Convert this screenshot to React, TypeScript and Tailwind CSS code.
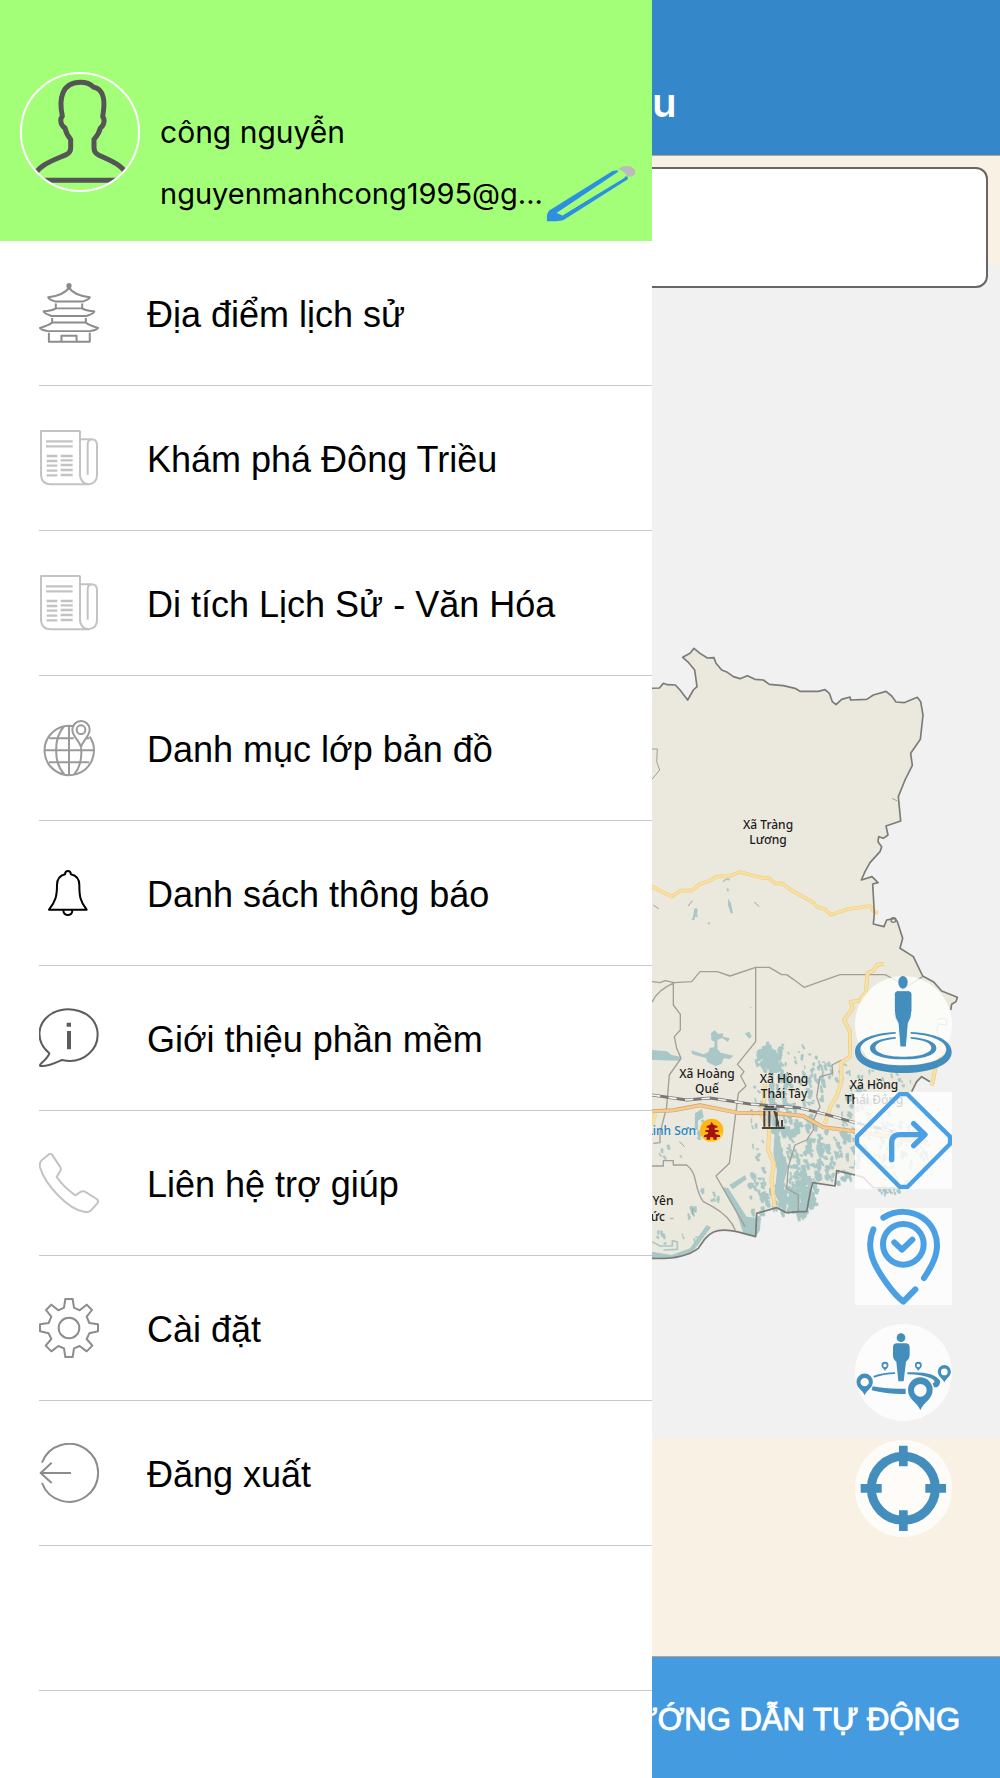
import type { ReactNode } from "react";

const GREY = "#8c8c8c";
const LIGHT = "#c3c3c3";
const BLUE = "#448ebd";
const SKY = "#4aa0e3";
const WATER = "#a9c7c6";

function Icon({ box, color, width = 6, children }: { box: string; color: string; width?: number; children: ReactNode }) {
  return (
    <svg
      aria-hidden="true"
      viewBox={box}
      className="size-[60px] shrink-0"
      fill="none"
      stroke={color}
      strokeWidth={width}
      strokeLinejoin="round"
    >
      {children}
    </svg>
  );
}

const temple = (
  <Icon box="117 70 180 182" color={GREY}>
    <path d="M207 84C196 101 172 110 144 113C145 120 155 122 164 126H250C259 122 269 120 270 113C242 110 218 101 207 84Z" />
    <circle cx="207" cy="78" r="5" fill={GREY} />
    <path d="M167 132V147M247 132V147M167 147H247M167 147C158 153 145 155 130 156C132 164 143 166 154 170H260C271 166 282 164 284 156C269 155 256 153 247 147" />
    <path d="M156 176V190M258 176V190M156 190H258M156 190C148 198 134 202 119 206C121 212 132 213 142 216H272C282 213 293 212 295 206C280 202 266 198 258 190" />
    <path d="M146 221V248H270V221M184 248V230H230V248" />
  </Icon>
);

const newspaper = (
  <Icon box="117 508 180 180" color={LIGHT}>
    <path d="M241 517H123V650Q125 676 152 677H266Q291 674 291 650V558Q290 542 274 542H241M240 517V650Q242 674 266 677M263 648V556Q264 543 276 542" />
    <path
      strokeWidth="7"
      d="M138 548H218M138 563H218M140 592H172M140 607H172M140 621H172M140 636H172M140 650H172M182 592H218M182 605H218M182 619H218M182 634H218M182 649H218"
    />
  </Icon>
);

const globe = (
  <Icon box="117 86 180 180" color="#9a9a9a">
    <path d="M223 111A74 74 0 1 0 269 142M207 108V257M133 183H281M148 147H221M258 147H267M147 219H267M193 110C160 145 160 220 193 255M243 176C247 205 239 237 222 255" />
    <path d="M243 173C237 151 217 141 217 121A26 26 0 0 1 269 121C269 141 249 151 243 173Z" />
    <circle cx="243" cy="121" r="13" />
  </Icon>
);

const bell = (
  <Icon box="117 522 180 180" color="#000">
    <path d="M195 556C196 543 211 543 213 556C229 560 238 570 238 588C238 620 240 638 260 662H147C167 638 171 620 171 588C171 572 180 560 195 556ZM190 664C190 683 217 683 217 664" />
  </Icon>
);

const info = (
  <Icon box="117 956 180 180" color="#5c5c5c">
    <path d="M148 1092C106 1057 108 1000 158 971C207 946 276 964 291 1018C303 1079 249 1127 186 1112C164 1122 142 1133 121 1130C115 1124 140 1114 148 1092Z" />
    <path d="M200 1006H213M207 1025V1080" strokeWidth="12" />
  </Icon>
);

const phone = (
  <Icon box="117 99 180 180" color={LIGHT}>
    <path d="M148 102L125 121Q117 129 120 142C137 197 205 268 252 275Q266 279 273 271L292 250Q297 242 290 237L255 215Q249 212 243 215L226 226C202 209 184 191 170 171L182 151Q184 145 180 140L156 104Q152 99 148 102Z" />
  </Icon>
);

const gear = (
  <Icon box="117 534 180 180" color={GREY}>
    <path d="M196 537H218L222 563L239 571L260 554L276 570L260 590L268 609L294 613V634L268 640L260 657L277 677L260 694L239 678L222 685L218 711H196L192 685L175 678L154 694L137 677L154 657L146 640L120 634V613L146 609L154 590L138 570L154 554L175 571L192 563Z" />
    <circle cx="207" cy="624" r="31" />
  </Icon>
);

const logout = (
  <Icon box="117 969 180 180" color={GREY}>
    <path d="M126 1028A87 87 0 1 1 126 1089M213 1059H122M155 1028L122 1059L155 1089" />
  </Icon>
);

const menu: { label: string; icon: ReactNode }[] = [
  { label: "Địa điểm lịch sử", icon: temple },
  { label: "Khám phá Đông Triều", icon: newspaper },
  { label: "Di tích Lịch Sử - Văn Hóa", icon: newspaper },
  { label: "Danh mục lớp bản đồ", icon: globe },
  { label: "Danh sách thông báo", icon: bell },
  { label: "Giới thiệu phần mềm", icon: info },
  { label: "Liên hệ trợ giúp", icon: phone },
  { label: "Cài đặt", icon: gear },
  { label: "Đăng xuất", icon: logout },
];

function Drawer() {
  return (
    <aside className="z-10 flex w-[65.2%] shrink-0 flex-col bg-white">
      <div className="flex h-[241px] items-start bg-[#a3ff78] pt-[72px] pr-4 pl-5">
        <svg role="img" aria-label="Ảnh đại diện" viewBox="60 66 360 360" className="size-[120px] shrink-0" fill="none">
          <defs>
            <clipPath id="avatar">
              <circle cx="240" cy="246" r="176" />
            </clipPath>
          </defs>
          <g clipPath="url(#avatar)" stroke="#555" strokeWidth="15" strokeLinejoin="round">
            <path d="M100 385C112 345 160 331 199 314Q212 307 212 294V268C203 258 198 248 195 234C181 226 179 207 187 199C176 147 185 97 242 97C259 97 270 101 280 111C316 117 315 161 308 200C316 208 312 227 301 234C298 248 291 258 282 268V294Q282 307 294 314C330 333 370 342 386 385" />
            <path d="M90 391H390" />
          </g>
          <circle cx="240" cy="246" r="177" stroke="#fff" strokeWidth="6" />
        </svg>
        <div className="min-w-0 flex-1 pt-[30px] pl-5 font-['Inter',sans-serif] whitespace-nowrap text-black">
          <p className="text-[30px] leading-[60px]">công nguyễn</p>
          <div className="flex items-center justify-between">
            <p className="text-[29px] leading-[64px]">nguyenmanhcong1995@g...</p>
            <button type="button" aria-label="Chỉnh sửa hồ sơ" className="shrink-0">
              <svg viewBox="620 343 270 172" className="h-[57px] w-[90px]">
                <path d="M820 358L628 478L622 491V510H650L671 507L866 383V375H858L669 492L651 485L836 361V356Z" fill="#2d8fe2" />
                <path d="M658 481L838 363L858 378L668 492Z" fill="#a3ff78" />
                <path d="M838 353C850 337 887 342 889 360C888 375 871 377 863 373Q857 359 838 353Z" fill="#bbb" />
              </svg>
            </button>
          </div>
        </div>
      </div>
      <nav aria-label="Menu chính">
        <ul>
          {menu.map((item) => (
            <li key={item.label} className="ml-[39px] h-[145px] border-b border-[#c9c9cb]">
              <button type="button" className="flex h-full w-full items-center gap-12 text-left text-[36px] whitespace-nowrap text-black">
                {item.icon}
                <span className="pt-1">{item.label}</span>
              </button>
            </li>
          ))}
          <li aria-hidden="true" className="ml-[39px] h-[145px] border-b border-[#c9c9cb]" />
        </ul>
      </nav>
    </aside>
  );
}

/* Irregular pond shapes scattered over an ellipse: [cx, cy, rx, ry, count, size]. */
const ponds: number[][] = [
  [385, 350, 40, 50, 40, 9],
  [450, 350, 110, 40, 18, 5],
  [420, 520, 40, 140, 55, 10],
  [490, 640, 50, 130, 75, 10],
  [480, 750, 40, 70, 70, 12],
  [590, 640, 60, 90, 60, 9],
  [570, 390, 60, 35, 20, 6],
  [430, 770, 70, 40, 40, 9],
  [350, 740, 25, 110, 30, 8],
  [510, 440, 40, 60, 28, 8],
  [350, 530, 20, 110, 14, 6],
  [640, 500, 60, 80, 30, 7],
  [720, 590, 80, 90, 50, 6],
  [790, 640, 80, 90, 45, 6],
  [740, 410, 90, 30, 14, 5],
  [740, 745, 45, 8, 14, 7],
  [110, 860, 80, 60, 12, 6],
  [190, 790, 50, 50, 9, 7],
  [90, 610, 50, 60, 5, 6],
  [180, 560, 20, 40, 5, 7],
];

function pondPath() {
  let seed = 17;
  const next = () => {
    seed = (seed * 16807) % 2147483647;
    return seed / 2147483647;
  };
  let d = "";
  for (const [cx, cy, rx, ry, count, size] of ponds) {
    for (let i = 0; i < count; i++) {
      const angle = next() * Math.PI * 2;
      const reach = Math.sqrt(next());
      const x = cx + Math.cos(angle) * rx * reach;
      const y = cy + Math.sin(angle) * ry * reach;
      const w = Math.round(size * (0.4 + next() * 0.9));
      const h = Math.round(size * (0.3 + next() * 1.4));
      const step = Math.round(size * (next() - 0.3));
      d += `M${x.toFixed(0)} ${y.toFixed(0)}h${w}v${h}h${step}v${Math.round(h * 0.7)}h${-Math.round(w * 0.7)}l${-Math.round(w * 0.6)} ${-h}z`;
    }
  }
  return d;
}

const land =
  "M30 205L58 204 70 190 82 194 106 195 120 210 143 240 160 210 171 200 164 150 146 128 128 112 150 100 162 85 180 100 202 114 222 113 228 130 245 150 262 157 280 170 300 176 322 167 345 178 370 180 388 193 430 197 465 205 480 214 535 214 555 209 568 220 577 245 588 254 605 238 630 231 632 240 680 238 700 225 738 214 755 228 768 246 792 248 832 232 842 245 849 285 841 358 812 400 817 436 795 480 775 530 782 603 738 618 744 645 730 655 716 650 714 665 725 680 720 695 690 728 675 755 664 780 696 770 714 788 698 792 703 880 700 912 732 920 740 900 765 895 772 905 788 955 780 985 820 1010 848 1068 880 1085 905 1113 952 1132 948 1145 935 1153 932 1170";

const landSouth =
  "L920 1195 892 1200 890 1220 903 1260 885 1345 870 1385 845 1375 830 1385 815 1415 830 1480 845 1590 878 1650 815 1662 780 1702 700 1700 670 1670 645 1665 590 1652 585 1698 518 1688 510 1720 500 1775 480 1775 440 1778 410 1763 350 1780 347 1850 310 1840C220 1815 205 1840 175 1885Q130 1920 30 1915Z";

function MapView() {
  return (
    <svg
      role="img"
      aria-label="Bản đồ Đông Triều"
      viewBox="652 265 348 1173"
      className="h-[1173px] w-full"
      fill="none"
      fontFamily="'Noto Sans', sans-serif"
    >
      <g transform="translate(640 620) scale(.33333)" strokeLinejoin="round">
        <path d={land + landSouth} fill="#ebe9dd" />
        <g transform="translate(0 960)">
          <path d={pondPath()} fill={WATER} stroke={WATER} strokeWidth="2" />
          <path
            d="M36 330L80 334L95 345L122 350V362L36 360ZM154 331L190 343L205 336L210 323L223 322L224 306L214 300L213 280L224 271L235 282L249 280V290L269 295L264 306L246 294L232 300L232 326L242 338L280 347L270 357L251 355L245 371L227 379L202 366L198 354L157 343ZM314 280L328 275L335 289L328 296ZM365 320L395 315L396 345L420 372L428 390L408 400L390 392L370 380L352 376L368 360ZM165 520L186 507L191 532L174 542L174 570H164ZM405 570L420 600L428 640L445 680L428 740L450 790L425 800L404 760L411 690L400 640ZM245 740L265 745L320 830L362 835L360 870L347 890L310 880L290 820ZM268 735L315 706L320 718L278 748ZM36 935L95 945L150 925L200 855L213 862L160 933L110 955L36 958ZM328 202L335 200V204Z"
            fill={WATER}
          />
          <path d="M36 905L60 918L97 918L97 902L112 906V928L70 930" stroke={WATER} strokeWidth="5" />
        </g>
        <g fill={WATER}>
          <path d="M163 865L173 866 171 885 175 891 165 890 163 901 155 900 160 886ZM265 835L273 850 279 880 272 880 264 855ZM260 805L267 806 265 815 260 813ZM203 907L211 908 208 914 203 912Z" />
          <path d="M249 785Q258 774 270 779" stroke={WATER} strokeWidth="5" fill="none" />
        </g>
        <g stroke="#a09f98" strokeWidth="4">
          <path d="M36 387H52L50 425L59 450L36 478M40 855L56 866M157 842L145 858M343 846L357 860M756 535L772 543" strokeWidth="3" />
          <g transform="translate(0 960)">
            <path d="M36 125L60 128L75 122L103 128L155 125L180 95H232L270 108L347 82H388L425 104H440L460 118L492 142L600 104H735L760 117L800 140L848 110" />
            <path d="M103 128C65 145 45 165 36 187M100 128V195L121 223V270L103 290L110 325L123 355L88 405L80 500L60 580V608L40 610M347 82V305L292 373L312 395L302 408L318 438L295 460L268 670L228 708L315 860M36 678H70V662H100V675H140C175 700 160 745 190 785L218 800C270 830 282 860 286 872M530 470L540 410L578 400L576 375L605 360M530 470L540 500L520 540V570L500 600L465 615L445 680L440 745L475 765V815" />
            <path d="M890 240L905 235L920 238V255L895 252L890 270L905 310L898 340M158 805V825M118 605L134 620M800 560L850 630L878 690" strokeWidth="3" />
          </g>
        </g>
        <g transform="translate(0 960)">
          {[
            ["#dfc98e", 12],
            ["#f9dfa0", 9],
          ].map(([color, width]) => (
            <g key={color} stroke={color as string} strokeWidth={width}>
              <path d="M732 72L712 74L700 92L682 100L678 155L658 183L632 185L638 205L612 240L630 275V350L604 368V425L590 470L572 498L555 550M375 432L372 485L362 520L388 570L384 630L402 670L394 720L404 800M46 522L36 555M905 300L885 390L876 438M870 655L875 705" />
            </g>
          ))}
          <path d="M36 514L100 511L180 496L292 518L425 521L490 528L550 562L645 574L860 608" stroke="#c7a374" strokeWidth="12" />
          <path d="M36 514L100 511L180 496L292 518L425 521L490 528L550 562L645 574L860 608" stroke="#f8c98b" strokeWidth="8" />
          <path d="M36 465L140 480L210 474L330 492L475 503L560 524L645 548L760 575" stroke="#77777a" strokeWidth="9" />
          <path d="M36 465L140 480L210 474L330 492L475 503L560 524L645 548L760 575" stroke="#f3f3f0" strokeWidth="5" strokeDasharray="25 25" />
        </g>
        <path d="M30 797L95 830L120 812H155L180 792L210 782L230 770L270 768L300 756L370 775L385 773L405 790L425 790L450 808L520 848L530 860L555 868L572 884L625 867L690 858L702 875L715 878" stroke="#ecd092" strokeWidth="11" />
        <path d="M30 797L95 830L120 812H155L180 792L210 782L230 770L270 768L300 756L370 775L385 773L405 790L425 790L450 808L520 848L530 860L555 868L572 884L625 867L690 858L702 875L715 878" stroke="#fae09b" strokeWidth="7" />
        <path d={land} stroke="#7b7b78" strokeWidth="5" />
        <path d="M870 1385L845 1370 830 1385 815 1415M780 1705L700 1703 670 1672 645 1665 590 1652 585 1698 518 1688 510 1720 500 1775 480 1775 440 1778 410 1763 350 1780 347 1850 310 1840C220 1815 205 1840 175 1885Q130 1920 30 1915" stroke="#7b7b78" strokeWidth="5" />
        <circle cx="760" cy="900" r="7" stroke="#7b7b78" strokeWidth="4" />
        <g transform="translate(0 960)">
          <circle cx="215" cy="571" r="35" fill="#fbb817" />
          <path d="M185 590Q222 620 247 573Q242 606 215 606Q195 606 185 590Z" fill="#ffd62e" />
          <path d="M215 546L220 554L232 558V563H224V569L236 571V576H226V582L240 586V591H230V599H220V592H210V599H200V591H192V586L204 582V576H196V571L207 569V563H200V558L211 554Z" fill="#a31111" />
          <path d="M370 508H410M373 513V560M388 513V560M403 513L418 560M366 564H434M410 517V560M426 540V560M374 500H402" stroke="#454545" strokeWidth="6" />
          <path d="M381 514V559M396 514V559M419 530V559" stroke="#d5d5c8" strokeWidth="4" />
        </g>
      </g>
      <g fontSize="12" fontWeight="500" fill="#1c1c1c" textAnchor="middle">
        <text x="768" y="829">Xã Tràng</text>
        <text x="768" y="844">Lương</text>
        <text x="707" y="1078">Xã Hoàng</text>
        <text x="707" y="1093">Quế</text>
        <text x="784" y="1083">Xã Hồng</text>
        <text x="784" y="1098">Thái Tây</text>
        <text x="874" y="1089">Xã Hồng</text>
        <text x="874" y="1104">Thái Đông</text>
        <text x="663" y="1205">Yên</text>
        <text x="665" y="1221" textAnchor="end">ức</text>
        <text x="696" y="1135" textAnchor="end" fill="#1c84c6">
          Linh Sơn
        </text>
      </g>
    </svg>
  );
}

const pin = "M0 50C-9 25-37 18-37-12A37 37 0 0 1 37-12C37 18 9 25 0 50ZM19-10A19 19 0 1 0-19-10A19 19 0 1 0 19-10Z";

const tools: { label: string; shape: string; box: string; art: ReactNode }[] = [
  {
    label: "Vị trí của tôi",
    shape: "rounded-full",
    box: "45 47 291 291",
    art: (
      <g fill={BLUE}>
        <path
          fillRule="evenodd"
          d="M167 215C90 219 45 240 45 275C45 315 110 338 190 338C270 338 335 315 335 275C335 240 290 219 212 215V220C275 224 319 242 319 267C319 297 265 315 190 315C115 315 61 297 61 267C61 242 105 224 167 220Z"
        />
        <path d="M167 230C120 234 90 245 90 263C90 286 135 297 190 297C245 297 289 286 289 263C289 245 260 234 212 230V235C250 238 274 247 274 262C274 279 235 289 190 289C145 289 106 279 106 262C106 247 130 238 167 235Z" />
        <path d="M172 91H206Q216 92 216 102V150Q215 174 205 188L199 260H180L174 188Q163 174 163 150V102Q163 92 172 91Z" stroke="#fcfbfa" strokeWidth="3" />
        <ellipse cx="189" cy="66" rx="14" ry="19" />
      </g>
    ),
  },
  {
    label: "Chỉ đường",
    shape: "",
    box: "45 395 291 291",
    art: (
      <g stroke={SKY} fill="none">
        <path d="M179 401H201L330 529V551L202 680H180L51 551V529Z" strokeWidth="13" />
        <path d="M155 598V548Q155 523 180 523H252M221 490L255 523L221 556" strokeWidth="16" strokeLinecap="round" strokeLinejoin="round" />
      </g>
    ),
  },
  {
    label: "Điểm đã đến",
    shape: "",
    box: "45 53 291 291",
    art: (
      <g stroke={SKY} fill="none" strokeWidth="18" strokeLinecap="round" strokeLinejoin="round">
        <path d="M130 82C212 32 306 97 289 185C284 216 266 242 252 263M100 117C75 175 102 227 139 277Q165 314 190 334L226 297" />
        <circle cx="190" cy="162" r="61" />
        <path d="M163 156L186 178L217 148" />
      </g>
    ),
  },
  {
    label: "Địa điểm quanh đây",
    shape: "rounded-full",
    box: "45 401 291 291",
    art: (
      <g fill={BLUE}>
        <path d="M98 588Q140 597 197 595V611Q140 612 95 600ZM100 557Q130 546 165 546V551Q130 552 102 562ZM202 546Q281 542 300 571Q302 582 291 591H282L278 579Q290 574 277 566Q250 552 202 552Z" />
        <circle cx="183" cy="442" r="13" />
        <path d="M168 459H199Q209 461 209 471V496Q208 507 198 514L191 573H175L169 514Q159 507 159 496V471Q159 461 168 459Z" />
        <path d={pin} transform="translate(241 610)" fillRule="evenodd" />
        <path d={pin} transform="translate(74 582) scale(.66)" fillRule="evenodd" />
        <path d={pin} transform="translate(313 550) scale(.53)" fillRule="evenodd" />
        <path d={pin} transform="translate(135 528) scale(.28)" fillRule="evenodd" />
        <path d={pin} transform="translate(235 528) scale(.28)" fillRule="evenodd" />
      </g>
    ),
  },
  {
    label: "Định vị",
    shape: "rounded-full",
    box: "45 749 291 291",
    art: (
      <g stroke={BLUE} fill="none">
        <circle cx="190" cy="894" r="96" strokeWidth="27" />
        <path d="M190 766V828M190 960V1022M62 894H125M256 894H318" strokeWidth="26" />
      </g>
    ),
  },
];

export default function App() {
  return (
    <div className="flex min-h-screen overflow-hidden font-['Liberation_Sans',Arial,sans-serif]">
      <Drawer />
      <main className="flex min-w-0 flex-1 flex-col bg-[#f9f1e3]">
        <header className="h-[155px] bg-[#3487c8] pt-[77px]">
          <h1 className="font-['Inter',sans-serif] text-[40px] leading-[52px] font-semibold text-white">u</h1>
        </header>
        <div className="relative flex-1 border-y border-[#b5a48f]">
          <div className="h-[109px]" />
          <div className="bg-[#f1f1f1]">
            <MapView />
          </div>
          <div className="absolute inset-x-0 top-0 pt-[11px] pr-3">
            <input
              type="search"
              aria-label="Tìm kiếm"
              className="block h-[121px] w-full appearance-none rounded-r-[12px] border-2 border-l-0 border-[#666] bg-white px-6 text-[36px] outline-none"
            />
          </div>
          <div className="absolute right-12 bottom-[119px] flex flex-col gap-[19px]">
            {tools.map((tool) => (
              <button key={tool.label} type="button" aria-label={tool.label} className={"size-[97px] bg-white/80 " + tool.shape}>
                <svg viewBox={tool.box} className="size-full">
                  {tool.art}
                </svg>
              </button>
            ))}
          </div>
        </div>
        <button
          type="button"
          className="flex h-[121px] items-center justify-end overflow-hidden bg-[#449be0] pt-1.5 pr-10 text-[31px] whitespace-nowrap text-white [-webkit-text-stroke:1px_white]"
        >
          ƯỚNG DẪN TỰ ĐỘNG
        </button>
      </main>
    </div>
  );
}
